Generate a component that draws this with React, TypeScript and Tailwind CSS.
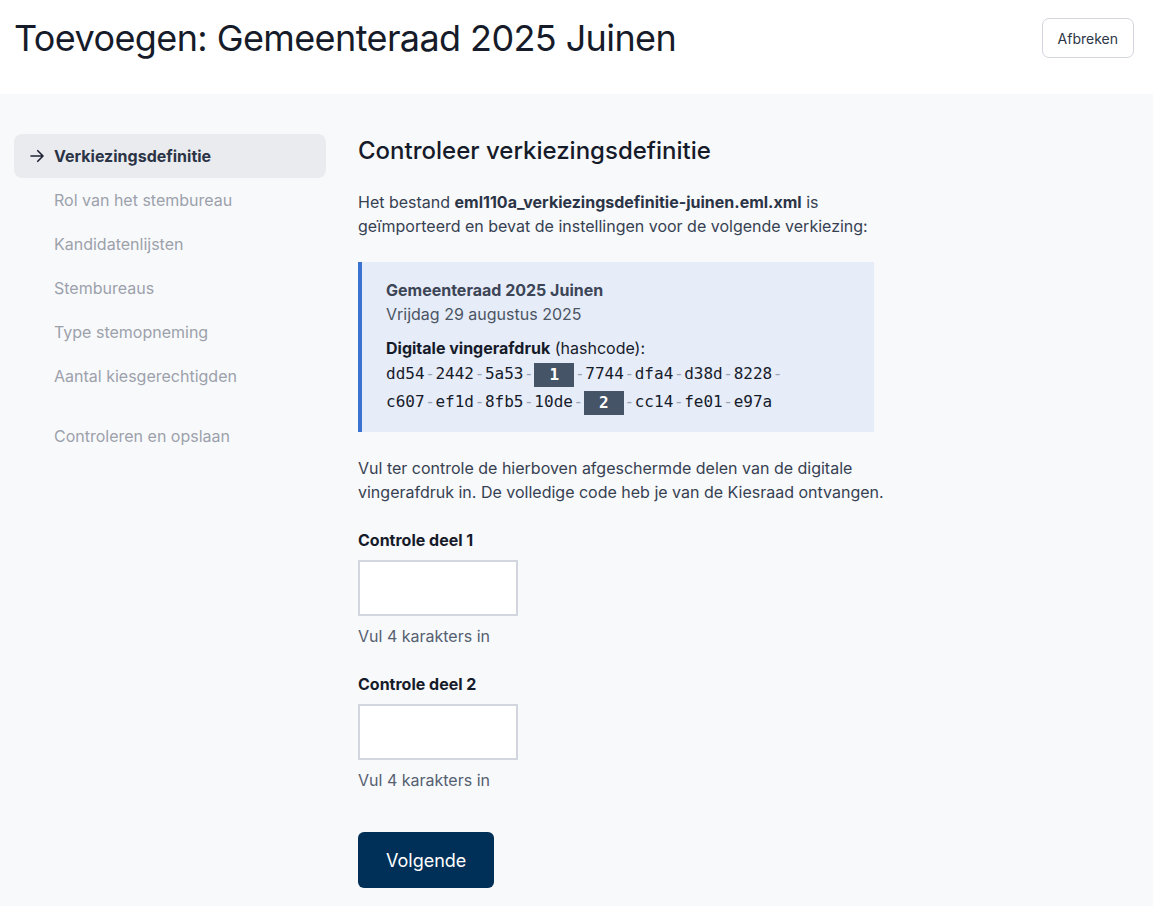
import React from "react";

const Sep = () => <span className="text-[#9aa3b2] px-[0.65px]">-</span>;
const Mask = ({ n }: { n: string }) => (
  <span className="inline-flex items-center justify-center w-[40px] h-[24px] bg-[#465467] text-white font-bold align-middle">
    {n}
  </span>
);

const Hash = ({ parts }: { parts: (string | { m: string })[] }) => (
  <div className="leading-[28px]">
    {parts.map((p, i) => (
      <React.Fragment key={i}>
        {typeof p === "string" ? <span>{p}</span> : <Mask n={p.m} />}
        {i < parts.length - 1 && <Sep />}
      </React.Fragment>
    ))}
  </div>
);

export default function App() {
  const items = [
    "Rol van het stembureau",
    "Kandidatenlijsten",
    "Stembureaus",
    "Type stemopneming",
    "Aantal kiesgerechtigden",
  ];
  return (
    <div className="min-h-[906px] bg-[#f8f9fb] text-[#2d3748]" style={{ fontFamily: "Inter, 'Liberation Sans', sans-serif" }}>
      <header className="bg-white h-[94px] flex items-start justify-between px-[14px] pt-[14px]">
        <h1 className="text-[36px] leading-[48px] text-[#161b2a] tracking-[-0.6px]">Toevoegen: Gemeenteraad 2025 Juinen</h1>
        <button className="mt-[4px] mr-[5px] h-[40px] px-[15px] border border-[#d3d6de] rounded-[7px] bg-white text-[14px] text-[#2d3748]">
          Afbreken
        </button>
      </header>
      <div className="flex pt-[40px] pb-[18px]">
        <nav className="w-[312px] ml-[14px] shrink-0 text-[16px]">
          <div className="h-[44px] rounded-[8px] bg-[#eaebef] flex items-center pl-[14px] font-bold text-[#2b3446]">
            <svg width="18" height="18" viewBox="0 0 24 24" fill="none" stroke="#1e2433" strokeWidth="2.2" strokeLinecap="round" strokeLinejoin="round" className="mr-[8px]">
              <path d="M4 12h16M13 5l7 7-7 7" />
            </svg>
            Verkiezingsdefinitie
          </div>
          {items.map((t) => (
            <div key={t} className="h-[44px] flex items-center pl-[40px] text-[#9ca1ab]">{t}</div>
          ))}
          <div className="h-[44px] mt-[16px] flex items-center pl-[40px] text-[#9ca1ab]">Controleren en opslaan</div>
        </nav>
        <main className="ml-[32px] w-[560px] text-[16px]">
          <h2 className="text-[24px] leading-[34px] text-[#161b2a] font-[450]">Controleer verkiezingsdefinitie</h2>
          <p className="mt-[22px] leading-[24px] text-[#364152] w-[516px]">
            Het bestand <strong className="text-[#2b3446]">eml110a_verkiezingsdefinitie-juinen.eml.xml</strong> is geïmporteerd en bevat de instellingen voor de volgende verkiezing:
          </p>
          <div className="mt-[24px] w-[516px] bg-[#e6ecf8] border-l-[4px] border-[#3b73d1] pl-[24px] pt-[16px] pb-[16px]">
            <div className="font-bold leading-[24px] text-[#3c4556]">Gemeenteraad 2025 Juinen</div>
            <div className="leading-[24px] text-[#4b5563]">Vrijdag 29 augustus 2025</div>
            <div className="mt-[10px] leading-[24px] text-[#161b2a]"><strong>Digitale vingerafdruk</strong> (hashcode):</div>
            <div className="text-[16px] text-[#161b2a]" style={{ fontFamily: "'DejaVu Sans Mono', 'Liberation Mono', monospace" }}>
              <Hash parts={["dd54", "2442", "5a53", { m: "1" }, "7744", "dfa4", "d38d", "8228", ""]} />
              <Hash parts={["c607", "ef1d", "8fb5", "10de", { m: "2" }, "cc14", "fe01", "e97a"]} />
            </div>
          </div>
          <p className="mt-[24px] leading-[24px] text-[#364152]">
            Vul ter controle de hierboven afgeschermde delen van de digitale<br />vingerafdruk in. De volledige code heb je van de Kiesraad ontvangen.
          </p>
          <label className="block mt-[24px] font-bold leading-[24px] text-[#161b2a]">Controle deel 1</label>
          <input className="block mt-[8px] w-[160px] h-[56px] border-2 border-[#d3d6de] bg-white outline-none" />
          <div className="mt-[8px] leading-[24px] text-[#556070]">Vul 4 karakters in</div>
          <label className="block mt-[24px] font-bold leading-[24px] text-[#161b2a]">Controle deel 2</label>
          <input className="block mt-[8px] w-[160px] h-[56px] border-2 border-[#d3d6de] bg-white outline-none" />
          <div className="mt-[8px] leading-[24px] text-[#556070]">Vul 4 karakters in</div>
          <button className="mt-[40px] h-[56px] px-[28px] rounded-[6px] bg-[#003058] text-white text-[18px]">Volgende</button>
        </main>
      </div>
    </div>
  );
}
